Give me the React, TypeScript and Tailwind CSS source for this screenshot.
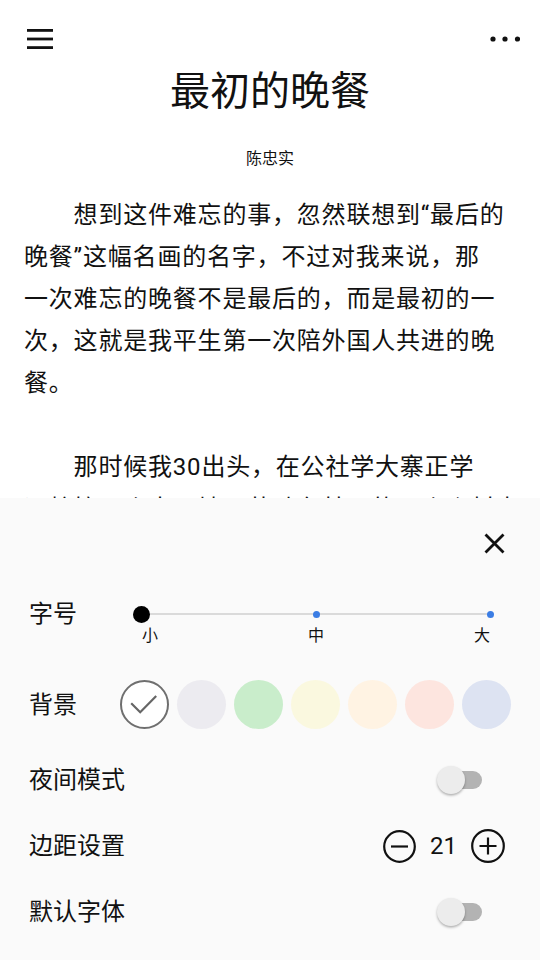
import React from "react";

const FONT = { fontFamily: 'Roboto, "Noto Sans CJK SC", sans-serif' };

function Toggle() {
  return (
    <div className="relative w-[45px] h-[28px]">
      <div className="absolute right-0 top-[5px] w-[36px] h-[18px] rounded-full bg-[#b3b3b3]" />
      <div className="absolute left-0 top-0 w-[28px] h-[28px] rounded-full bg-[#ececec] shadow-[0_1.5px_2.5px_rgba(0,0,0,0.3)]" />
    </div>
  );
}

const swatches = ["#ecebf0", "#c9edcb", "#faf8df", "#fff3e3", "#fde5df", "#dde3f2"];

const para1 = [
  "\u3000\u3000想到这件难忘的事，忽然联想到“最后的",
  "晚餐”这幅名画的名字，不过对我来说，那",
  "一次难忘的晚餐不是最后的，而是最初的一",
  "次，这就是我平生第一次陪外国人共进的晚",
  "餐。",
];
const para2 = [
  "\u3000\u3000那时候我30出头，在公社学大寨正学",
  "运粮搞一个大工地，劳动在基层的一个乡村中",
];

export default function App() {
  return (
    <div className="relative w-[540px] h-[960px] overflow-hidden bg-white text-[#111]" style={FONT}>
      {/* header */}
      <div className="flex items-center justify-between pl-[27px] pr-[20px] pt-[29px]">
        <svg width="26" height="20" viewBox="0 0 26 20">
          <rect x="0" y="0" width="26" height="2.8" fill="#111" />
          <rect x="0" y="8.6" width="26" height="2.8" fill="#111" />
          <rect x="0" y="17.2" width="26" height="2.8" fill="#111" />
        </svg>
        <svg width="30" height="6" viewBox="0 0 30 6">
          <circle cx="3" cy="3" r="2.6" fill="#111" />
          <circle cx="15" cy="3" r="2.6" fill="#111" />
          <circle cx="27.5" cy="3" r="2.6" fill="#111" />
        </svg>
      </div>

      <div className="mt-[19px] text-center text-[40px] leading-[48px]">最初的晚餐</div>
      <div className="mt-[33px] text-center text-[16px] leading-[20px]">陈忠实</div>

      <div className="mt-[25px] px-[24px] text-[24px] leading-[42px] tracking-[0.8px] whitespace-nowrap">
        {para1.map((l, i) => (
          <div key={i}>{l}</div>
        ))}
        <div className="h-[42px]" />
        {para2.map((l, i) => (
          <div key={i}>{l}</div>
        ))}
      </div>

      {/* settings panel */}
      <div className="absolute left-0 right-0 bottom-0 top-[498px] bg-[#fafafa] flex flex-col">
        <div className="h-[91px] flex items-center justify-end pr-[35px]">
          <svg width="21" height="21" viewBox="0 0 21 21">
            <path d="M1.5 1.5 L19.5 19.5 M19.5 1.5 L1.5 19.5" stroke="#111" strokeWidth="2.8" />
          </svg>
        </div>

        <div className="mt-[13px] flex items-start pl-[29px]">
          <div className="w-[104px] text-[24px] leading-[24px]">字号</div>
          <div className="w-[366px] flex flex-col">
            <div className="relative h-[24px] flex items-center justify-between">
              <div className="absolute left-[8.5px] right-[8.5px] top-[11px] h-[2px] bg-[#dadada]" />
              <div className="relative w-[17px] h-[17px] rounded-full bg-black" />
              <div className="relative w-[17px] flex justify-center">
                <div className="w-[7px] h-[7px] rounded-full bg-[#3b7de4]" />
              </div>
              <div className="relative w-[17px] flex justify-center">
                <div className="w-[7px] h-[7px] rounded-full bg-[#3b7de4]" />
              </div>
            </div>
            <div className="flex justify-between px-[9px] text-[16px] leading-[20px]">
              <span>小</span>
              <span>中</span>
              <span>大</span>
            </div>
          </div>
        </div>

        <div className="mt-[34px] h-[49px] flex items-center pl-[29px]">
          <div className="w-[91px] text-[24px] leading-[24px]">背景</div>
          <div className="flex gap-[8px]">
            <div className="w-[49px] h-[49px] rounded-full bg-white border-2 border-[#6f6f6f] flex items-center justify-center">
              <svg width="45" height="45" viewBox="0 0 45 45">
                <path d="M9.2 21.3 L18.2 30.3 L34.2 14" fill="none" stroke="#666" strokeWidth="2.2" />
              </svg>
            </div>
            {swatches.map((c) => (
              <div key={c} className="w-[49px] h-[49px] rounded-full" style={{ backgroundColor: c }} />
            ))}
          </div>
        </div>

        <div className="mt-[18px] h-[66px] flex items-center justify-between pl-[29px] pr-[58px]">
          <div className="text-[24px] leading-[24px]">夜间模式</div>
          <Toggle />
        </div>

        <div className="h-[66px] flex items-center justify-between pl-[29px] pr-[35px]">
          <div className="text-[24px] leading-[24px]">边距设置</div>
          <div className="flex items-center gap-[14px]">
            <svg width="33" height="33" viewBox="0 0 33 33">
              <circle cx="16.5" cy="16.5" r="15.3" fill="none" stroke="#111" strokeWidth="2.2" />
              <path d="M8 16.5 H25" stroke="#111" strokeWidth="2.2" />
            </svg>
            <span className="text-[24px] leading-[24px]">21</span>
            <svg width="34" height="34" viewBox="0 0 34 34">
              <circle cx="17" cy="17" r="15.8" fill="none" stroke="#111" strokeWidth="2.2" />
              <path d="M8.5 17 H25.5 M17 8.5 V25.5" stroke="#111" strokeWidth="2.2" />
            </svg>
          </div>
        </div>

        <div className="h-[66px] flex items-center justify-between pl-[29px] pr-[58px]">
          <div className="text-[24px] leading-[24px]">默认字体</div>
          <Toggle />
        </div>
      </div>
    </div>
  );
}
